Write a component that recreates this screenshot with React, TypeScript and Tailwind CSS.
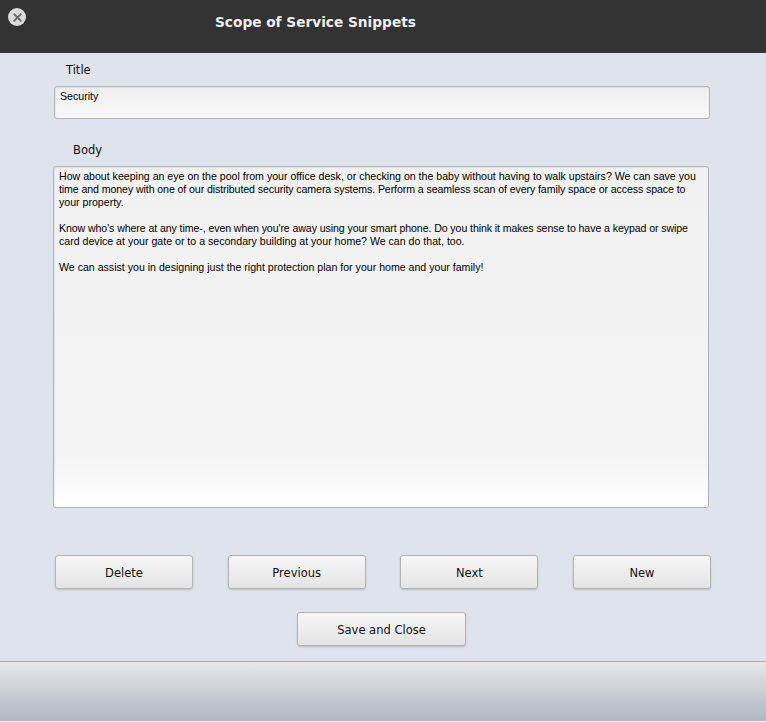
import { X } from "lucide-react";

const bodyLines = [
  { text: "How about keeping an eye on the pool from your office desk, or checking on the baby without having to walk upstairs? We can save you", tight: false },
  { text: "time and money with one of our distributed security camera systems. Perform a seamless scan of every family space or access space to", tight: true },
  { text: "your property.", tight: false },
  { text: "", tight: false },
  { text: "Know who's where at any time-, even when you're away using your smart phone. Do you think it makes sense to have a keypad or swipe", tight: true },
  { text: "card device at your gate or to a secondary building at your home? We can do that, too.", tight: false },
  { text: "", tight: false },
  { text: "We can assist you in designing just the right protection plan for your home and your family!", tight: false },
];

const ActionButton = ({ label, width }: { label: string; width: string }) => (
  <button
    className={`${width} h-[34px] shrink-0 rounded-[3px] border border-[#b3b3b3] bg-gradient-to-b from-[#f6f6f6] to-[#e4e4e4] pt-[4px] text-[11.5px] text-[#111] shadow-[0_1px_2px_rgba(0,0,0,0.18)] font-['DejaVu_Sans',sans-serif]`}
  >
    {label}
  </button>
);

export default function App() {
  return (
    <div className="flex h-[722px] w-[766px] flex-col overflow-hidden bg-[#dfe3eb] font-['DejaVu_Sans',sans-serif]">
      {/* Header */}
      <header className="relative h-[53px] shrink-0 bg-[#333333]">
        <div className="absolute left-[8px] top-[8px] flex h-[18px] w-[18px] items-center justify-center rounded-full bg-[#dcdcdc]">
          <X className="h-[13px] w-[13px] text-[#6a6a6a]" strokeWidth={3.4} />
        </div>
        <h1 className="pl-[215px] pt-[13px] text-[13.7px] leading-[18px] font-bold text-[#eeeeee]">
          Scope of Service Snippets
        </h1>
      </header>

      {/* Form */}
      <main className="flex-1 pt-[10px]">
        <label className="ml-[66px] block text-[11.5px] leading-[14px] text-[#111]">Title</label>
        <div className="mt-[9px] ml-[54px] h-[33px] w-[656px] rounded-[3px] border border-[#b3b3b3] bg-gradient-to-b from-[#efefef] to-[#f8f8f8] px-[5px] pt-[3px] font-['Liberation_Sans',sans-serif] text-[10.6px] leading-[13px] text-[#000] shadow-[inset_1px_1px_1px_rgba(0,0,0,0.06)]">
          Security
        </div>

        <label className="mt-[24px] ml-[73px] block text-[11.5px] leading-[14px] text-[#111]">Body</label>
        <div className="mt-[9px] ml-[53px] h-[342px] w-[656px] rounded-[3px] border border-[#b3b3b3] bg-gradient-to-b from-[#f1f1f1] via-[#f4f4f4] via-85% to-[#ffffff] px-[5px] pt-[3px] font-['Liberation_Sans',sans-serif] text-[10.6px] leading-[13px] text-[#000] shadow-[inset_1px_1px_1px_rgba(0,0,0,0.06)]">
          {bodyLines.map((line, i) => (
            <div key={i} className={line.tight ? "h-[13px] whitespace-nowrap tracking-[-0.09px]" : "h-[13px] whitespace-nowrap"}>
              {line.text}
            </div>
          ))}
        </div>

        <div className="mt-[47px] ml-[55px] flex w-[656px] justify-between">
          <ActionButton label="Delete" width="w-[138px]" />
          <ActionButton label="Previous" width="w-[138px]" />
          <ActionButton label="Next" width="w-[138px]" />
          <ActionButton label="New" width="w-[138px]" />
        </div>
        <div className="mt-[23px] ml-[297px]">
          <ActionButton label="Save and Close" width="w-[169px]" />
        </div>
      </main>

      {/* Footer */}
      <footer className="h-[61px] shrink-0 border-t border-b border-t-[#a9a9a9] border-b-[#f0f2f4] bg-gradient-to-b from-[#e6e8eb] to-[#afb7c2]" />
    </div>
  );
}
